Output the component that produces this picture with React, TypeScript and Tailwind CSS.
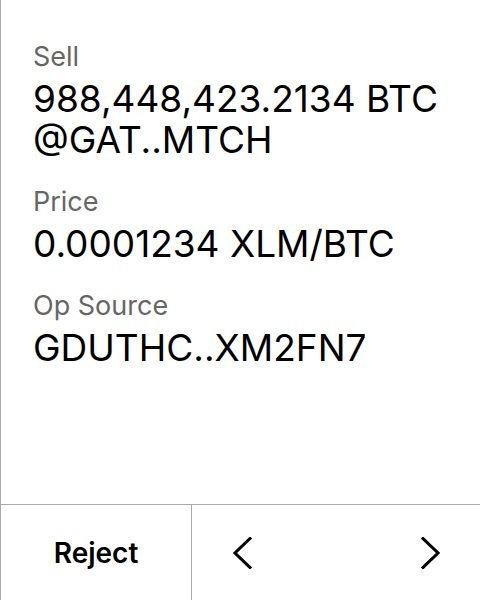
import React from 'react';

const rows = [
  { label: 'Sell', value: ['988,448,423.2134 BTC', '@GAT..MTCH'] },
  { label: 'Price', value: ['0.0001234 XLM/BTC'] },
  { label: 'Op Source', value: ['GDUTHC..XM2FN7'] },
];

const Chevron: React.FC<{ dir: 'left' | 'right' }> = ({ dir }) => (
  <svg width="19" height="32" viewBox="0 0 19 32" fill="none" stroke="#000" strokeWidth="3" strokeLinecap="square">
    {dir === 'left' ? <path d="M17 1.5 L2 16 L17 30.5" /> : <path d="M2 1.5 L17 16 L2 30.5" />}
  </svg>
);

export default function App() {
  return (
    <div className="w-[480px] h-[600px] flex flex-col bg-white border-l border-[#aaaaaa] font-['Inter',sans-serif] text-black">
      <div className="flex-1 pl-8 pt-[41px] flex flex-col gap-[26px]">
        {rows.map((r) => (
          <div key={r.label} className="flex flex-col">
            <span className="text-[27px] leading-[32px] text-[#666666]">{r.label}</span>
            <div className="mt-[5px] flex flex-col">
              {r.value.map((v) => (
                <span key={v} className="text-[37px] leading-[41px] whitespace-nowrap">{v}</span>
              ))}
            </div>
          </div>
        ))}
      </div>
      <div className="h-24 border-t border-[#aaaaaa] flex">
        <div className="w-[191px] border-r border-[#aaaaaa] flex items-center justify-center">
          <span className="text-[28px] font-semibold">Reject</span>
        </div>
        <div className="flex-1 flex items-center justify-between pl-[41px] pr-[40px]">
          <Chevron dir="left" />
          <Chevron dir="right" />
        </div>
      </div>
    </div>
  );
}
